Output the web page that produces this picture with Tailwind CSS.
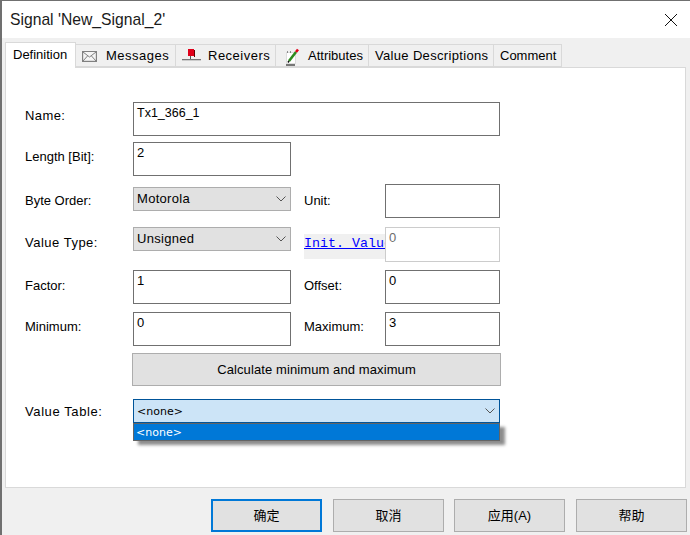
<!DOCTYPE html>
<html lang="en">
  <head>
    <meta charset="UTF-8" />
    <title>Signal 'New_Signal_2'</title>
    <script src="https://cdn.jsdelivr.net/npm/@tailwindcss/browser@4"></script>
  </head>
  <body class="w-[690px] h-[535px] overflow-hidden bg-[#f0f0f0] border-t border-l-2 border-[#707070] flex flex-col text-[13px] leading-[16px] text-black font-['Liberation_Sans','Noto_Sans_CJK_SC',sans-serif]">
    <!-- title bar -->
    <div class="h-[37px] shrink-0 bg-white flex items-center justify-between pl-[8px] pr-[12px]">
      <span class="text-[15.7px] text-[#1a1a1a]">Signal 'New_Signal_2'</span>
      <svg width="14" height="14" viewBox="0 0 14 14" fill="none" stroke="#111" stroke-width="1"><path d="M1 1l12 12M13 1L1 13" /></svg>
    </div>

    <!-- tabs -->
    <div class="h-[29px] shrink-0 pl-[3px] flex items-end">
      <div class="relative z-10 -mb-px h-[26px] w-[71px] bg-white border border-b-0 border-[#d9d9d9] pl-[7px] pt-[4px]">Definition</div>
      <div class="h-[23px] w-[100px] border-y border-r border-[#d9d9d9] flex items-center pl-[6px]">
        <svg class="mr-[9px] mt-[1px]" width="15" height="11" viewBox="0 0 15 11" fill="#f4f4f4" stroke="#808080"><rect x="0.500" y="0.500" width="14" height="10" stroke-width="1.400" /><path d="M1 1l6.500 5L14 1M1 10l4.500-5M14 10L9.500 5" /></svg>
        <span class="tracking-[0.5px]">Messages</span>
      </div>
      <div class="h-[23px] w-[100px] border-y border-r border-[#d9d9d9] flex items-center pl-[6px]">
        <svg class="mr-[7px]" width="19" height="14" viewBox="0 0 19 14"><rect x="6" y="0" width="6" height="7" fill="#e0001a" /><rect x="12" y="1" width="1" height="7" fill="#600" /><rect x="8" y="7" width="1" height="4" fill="#555" /><rect x="0" y="10" width="19" height="1" fill="#777" /><rect x="0" y="11" width="19" height="1" fill="#ccc" /></svg>
        <span class="tracking-[0.5px]">Receivers</span>
      </div>
      <div class="h-[23px] w-[93px] border-y border-r border-[#d9d9d9] flex items-center pl-[9px]">
        <svg class="mr-[9px]" width="14" height="20" viewBox="0 0 14 20"><rect x="1.500" y="6.500" width="9" height="11" fill="#fff" stroke="#ddd" /><rect x="1" y="18" width="9" height="2" fill="#777" /><path d="M4 15l7-9" stroke="#2c8a1e" stroke-width="2.600" /><path d="M11 6l2-2.500" stroke="#e0001a" stroke-width="2.600" /><path d="M3 16.500l1-1.500" stroke="#111" stroke-width="1.500" /><path d="M2 6h1M5 6h1" stroke="#333" /></svg>
        <span>Attributes</span>
      </div>
      <div class="h-[23px] w-[125px] border-y border-r border-[#d9d9d9] flex items-center pl-[6px]"><span class="tracking-[0.33px]">Value Descriptions</span></div>
      <div class="h-[23px] w-[68px] border-y border-r border-[#d9d9d9] flex items-center pl-[6px]">Comment</div>
    </div>

    <!-- definition page -->
    <div class="ml-[3px] mr-[4px] h-[421px] shrink-0 bg-white border border-[#d9d9d9] pt-[34px]">
      <div class="flex h-[34px]">
        <div class="w-[127px] pl-[19px] pt-[6px] tracking-[0.4px]">Name:</div>
        <div class="w-[367px] border border-[#707070] px-[3px] pt-[3px] leading-[14px] text-[12.500px]">Tx1_366_1</div>
      </div>

      <div class="flex h-[34px] mt-[6px]">
        <div class="w-[127px] pl-[19px] pt-[7px]">Length [Bit]:</div>
        <div class="w-[158px] border border-[#707070] px-[3px] pt-[3px] leading-[14px]">2</div>
      </div>

      <div class="flex h-[34px] mt-[8px]">
        <div class="w-[127px] pl-[19px] pt-[9px]">Byte Order:</div>
        <div class="mt-[3px] h-[24px] w-[158px] bg-[#e1e1e1] border border-[#adadad] flex items-center justify-between pl-[3px] pr-[4px]">
          <span class="tracking-[0.3px]">Motorola</span>
          <svg width="10" height="6" viewBox="0 0 10 6" fill="none" stroke="#555"><path d="M0.500 0.500L5 5l4.500-4.500" /></svg>
        </div>
        <div class="w-[94px] pl-[13px] pt-[9px]">Unit:</div>
        <div class="w-[115px] border border-[#707070]"></div>
      </div>

      <div class="flex h-[35px] mt-[9px]">
        <div class="w-[127px] pl-[19px] pt-[8px] tracking-[0.5px]">Value Type:</div>
        <div class="h-[24px] w-[158px] bg-[#e1e1e1] border border-[#adadad] flex items-center justify-between pl-[3px] pr-[4px]">
          <span class="tracking-[0.3px]">Unsigned</span>
          <svg width="10" height="6" viewBox="0 0 10 6" fill="none" stroke="#555"><path d="M0.500 0.500L5 5l4.500-4.500" /></svg>
        </div>
        <div class="w-[13px]"></div>
        <div class="mt-[7px] h-[25px] w-[81px] pt-[1px] bg-[#f0f0f0] overflow-hidden whitespace-nowrap">
          <a href="#" class="text-[13.330px] leading-[16px] text-[#0000ff] underline font-['Liberation_Mono',monospace]">Init. Value</a>
        </div>
        <div class="w-[115px] border border-[#cccccc] px-[3px] pt-[3px] leading-[14px] text-[#6d6d6d]">0</div>
      </div>

      <div class="flex h-[34px] mt-[8px]">
        <div class="w-[127px] pl-[19px] pt-[8px]">Factor:</div>
        <div class="w-[158px] border border-[#707070] px-[3px] pt-[3px] leading-[14px]">1</div>
        <div class="w-[94px] pl-[13px] pt-[8px]">Offset:</div>
        <div class="w-[115px] border border-[#707070] px-[3px] pt-[3px] leading-[14px]">0</div>
      </div>

      <div class="flex h-[34px] mt-[8px]">
        <div class="w-[127px] pl-[19px] pt-[7px]">Minimum:</div>
        <div class="w-[158px] border border-[#707070] px-[3px] pt-[3px] leading-[14px]">0</div>
        <div class="w-[94px] pl-[13px] pt-[7px]">Maximum:</div>
        <div class="w-[115px] border border-[#707070] px-[3px] pt-[3px] leading-[14px]">3</div>
      </div>

      <button class="block ml-[126px] mt-[7px] w-[369px] h-[33px] bg-[#e1e1e1] border border-[#adadad] tracking-[0.1px]">Calculate minimum and maximum</button>

      <div class="flex mt-[13px]">
        <div class="w-[127px] pl-[19px] pt-[5px] tracking-[0.6px]">Value Table:</div>
        <div class="relative w-[367px] h-[24px] bg-[#cce4f7] border border-[#005499] flex items-center justify-between pl-[3px] pr-[4px]">
          <span class="pt-[1px] font-['DejaVu_Sans',sans-serif] text-[11px]">&lt;none&gt;</span>
          <svg width="10" height="6" viewBox="0 0 10 6" fill="none" stroke="#555"><path d="M0.500 0.500L5 5l4.500-4.500" /></svg>
          <div class="absolute left-[-1px] top-[23px] w-[367px] h-[18px] pt-[1px] bg-[#0078d7] border border-[#646464] text-white pl-[2px] shadow-[5px_4px_3px_rgba(0,0,0,0.45)] font-['DejaVu_Sans',sans-serif] text-[11px]">&lt;none&gt;</div>
        </div>
      </div>
    </div>

    <!-- dialog buttons -->
    <div class="flex pt-[11px] pl-[209px]">
      <button class="w-[111px] h-[33px] pt-[1px] bg-[#e1e1e1] border-2 border-[#0078d7]">确定</button>
      <button class="ml-[11px] w-[111px] h-[33px] pt-[1px] bg-[#e1e1e1] border border-[#adadad]">取消</button>
      <button class="ml-[10px] w-[111px] h-[33px] pt-[1px] bg-[#e1e1e1] border border-[#adadad]">应用(A)</button>
      <button class="ml-[11px] w-[111px] h-[33px] pt-[1px] bg-[#e1e1e1] border border-[#adadad]">帮助</button>
    </div>
  </body>
</html>
